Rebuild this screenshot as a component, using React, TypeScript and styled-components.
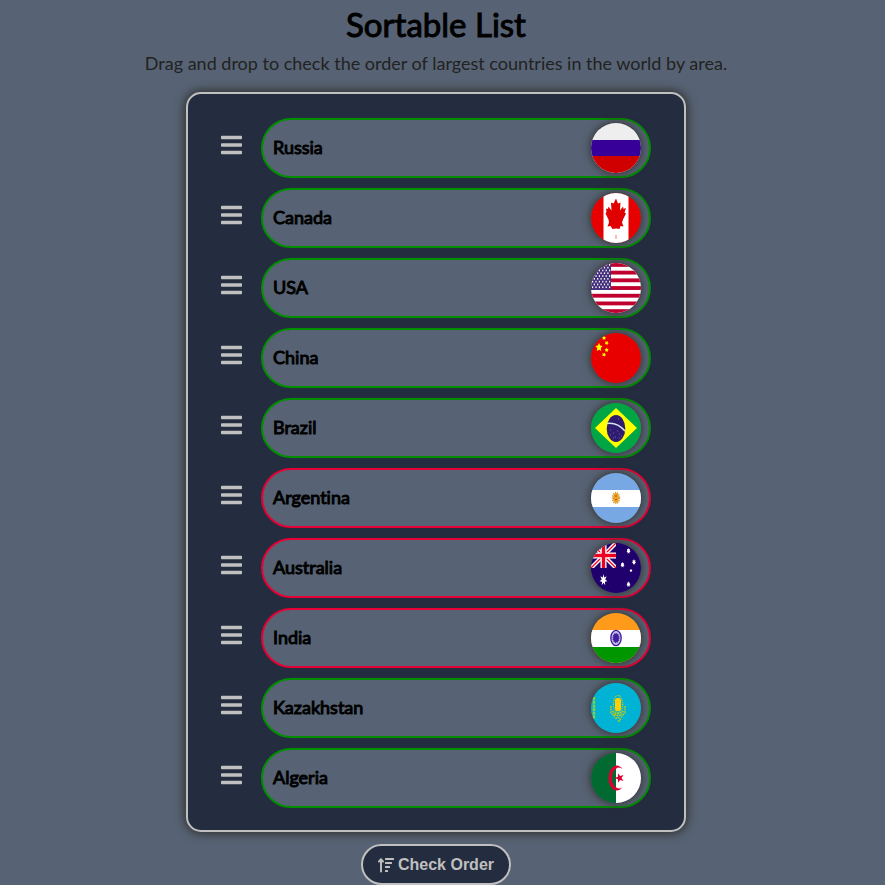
import React, { useState } from "react";
import styled, { createGlobalStyle } from "styled-components";
import { FaBars } from "react-icons/fa";

const GlobalStyle = createGlobalStyle`
  * { box-sizing: border-box; }
  body {
    margin: 0;
    background: #576374;
    font-family: Lato, sans-serif;
    font-variant-ligatures: none;
    color: #000;
  }
`;

const Page = styled.main`
  display: flex;
  flex-direction: column;
  align-items: center;
  padding-right: 13px;
`;

const Title = styled.h1`
  margin: 4px 0 7px;
  font-size: 33px;
  line-height: 40px;
  font-weight: 400;
  -webkit-text-stroke: 1px currentColor;
`;

const Lead = styled.p`
  margin: 0 0 17px;
  font-size: 18px;
  line-height: 24px;
  color: #222;
`;

const Panel = styled.ul`
  list-style: none;
  width: 100%;
  max-width: 500px;
  margin: 0;
  padding: 24px 33px 22px;
  display: flex;
  flex-direction: column;
  gap: 10px;
  background: #242c3f;
  border: 2px solid #c0c0c0;
  border-radius: 15px;
  box-shadow: 0 0 10px 2px #333;
`;

const Item = styled.li`
  display: flex;
  align-items: center;
  gap: 19px;
`;

const Handle = styled.span`
  display: flex;
  padding-bottom: 6px;
  color: #c0c0c0;
  font-size: 24px;
  cursor: grab;
  svg { width: 21px; height: 24px; }
`;

const Pill = styled.div<{ $correct: boolean }>`
  flex: 1;
  display: flex;
  align-items: center;
  justify-content: space-between;
  height: 60px;
  padding: 0 8px 0 10px;
  border: 2px solid ${(p) => (p.$correct ? "#008f00" : "#e60035")};
  border-radius: 30px;
  background: #576374;
  cursor: grab;
`;

const Country = styled.span`
  padding-bottom: 2px;
  font-size: 18px;
  line-height: 24px;
  -webkit-text-stroke: 1px currentColor;
`;

const Flag = styled.svg`
  width: 50px;
  height: 50px;
  border-radius: 50%;
  box-shadow: 0 0 8px 1px #333;
`;

const CheckButton = styled.button`
  display: flex;
  align-items: center;
  gap: 4px;
  height: 41px;
  margin-top: 12px;
  padding: 0 15px;
  border: 2px solid #c0c0c0;
  border-radius: 21px;
  background: #242c3f;
  color: #c0c0c0;
  font: bold 16px "Liberation Sans", Arial, sans-serif;
  cursor: pointer;
`;

const SortIcon = () => (
  <svg width="16" height="16" viewBox="0 0 16 16" fill="currentColor" aria-hidden="true">
    <path
      d="M3 14.500V2.500M0.900 4.600L3 2.200 5.100 4.600"
      fill="none"
      stroke="currentColor"
      strokeWidth="1.900"
      strokeLinecap="round"
      strokeLinejoin="round"
    />
    <rect x="7" y="1" width="9" height="2" rx="0.500" />
    <rect x="7" y="5" width="7" height="2" rx="0.500" />
    <rect x="7" y="9" width="5" height="2" rx="0.500" />
    <rect x="7" y="13" width="3" height="2" rx="0.500" />
  </svg>
);

const star = (cx: number, cy: number, r: number, points = 5, inner = 0.4, turn = 0) =>
  Array.from({ length: points * 2 }, (_, i) => {
    const radius = i % 2 ? r * inner : r;
    const a = (Math.PI * i) / points - Math.PI / 2 + turn;
    return `${(cx + radius * Math.cos(a)).toFixed(2)},${(cy + radius * Math.sin(a)).toFixed(2)}`;
  }).join(" ");

const flags: Record<string, React.ReactNode> = {
  Russia: (
    <>
      <rect width="50" height="50" fill="#eee" />
      <rect y="17" width="50" height="16" fill="#360099" />
      <rect y="33" width="50" height="17" fill="#d00000" />
    </>
  ),
  Canada: (
    <>
      <rect width="50" height="50" fill="#e60000" />
      <rect x="12.500" width="25" height="50" fill="#fff" />
      <path
        fill="#e00000"
        d="M25 5.500l2 5 2.500-1-.5 8 3-4 .5 2.500 2.500-1-1.500 4.500 1.500 1-3 6-1 3 1.500 4-3-.5-1 3-3-.5-4 .5-2-3-3 .5 1.500-4-.5-3-3-6 1-1.500-.5-3.500 2 .5.5-2.500 3 4-.5-8 2.500 1z"
      />
      <path fill="#f5a0a0" d="M24.300 42h1.400v4h-1.400z" />
    </>
  ),
  USA: (
    <>
      <rect width="50" height="50" fill="#fff" />
      {Array.from({ length: 7 }, (_, i) => (
        <rect key={i} y={i * 7.7} width="50" height="3.850" fill="#c0002f" />
      ))}
      <rect width="20" height="27" fill="#43307c" />
      {Array.from({ length: 9 }, (_, r) =>
        Array.from({ length: r % 2 ? 5 : 6 }, (_, c) => (
          <rect
            key={`${r}-${c}`}
            x={1 + c * 3.4 + (r % 2 ? 1.7 : 0)}
            y={1 + r * 2.8}
            width="1.200"
            height="1.700"
            fill="#fff"
          />
        ))
      )}
    </>
  ),
  China: (
    <>
      <rect width="50" height="50" fill="#e80000" />
      <g fill="#ff0">
        <polygon points={star(8, 12, 3.8, 5, 0.5)} transform="scale(1 1.200)" />
        <polygon points={star(13, 5, 2.2, 5, 0.55)} />
        <polygon points={star(15.7, 10, 2.2, 5, 0.55, 0.4)} />
        <polygon points={star(15.7, 17, 2.2, 5, 0.55)} />
        <polygon points={star(13, 21.7, 2.2, 5, 0.55, 0.4)} />
      </g>
    </>
  ),
  Brazil: (
    <>
      <rect width="50" height="50" fill="#00a644" />
      <path fill="#ff0" d="M25 5l21 20-21 20L4 25z" />
      <ellipse cx="25" cy="25.500" rx="9.300" ry="13.500" fill="#2f1b70" />
      <path d="M16 20.500Q26 19 34 28" fill="none" stroke="#d3e5ee" strokeWidth="1.600" />
      <path
        d="M19 27h1M22 30h1M19 32h1M24 34h1M28 31h1M26 28h1M30 33h1M22 35h1M28 35h1M27 16h1"
        stroke="#8074b0"
        strokeWidth="0.800"
      />
    </>
  ),
  Argentina: (
    <>
      <rect width="50" height="50" fill="#78a8e4" />
      <rect y="17" width="50" height="17" fill="#fff" />
      <ellipse cx="25" cy="25" rx="3" ry="5" fill="#f0a020" />
      <ellipse cx="25" cy="25" rx="3.500" ry="5.500" fill="none" stroke="#d69a3a" strokeWidth="1.500" strokeDasharray="1.200 1" />
      <path d="M24 23h2M24 26.500h2" stroke="#8a5a10" strokeWidth="0.800" />
    </>
  ),
  Australia: (
    <>
      <rect width="50" height="50" fill="#20006c" />
      <path d="M0 0l25 25M25 0L0 25" stroke="#fff" strokeWidth="4" />
      <path d="M0 0l25 25M25 0L0 25" stroke="#f00020" strokeWidth="1.300" />
      <path d="M12.500 0v25M0 12.500h25" stroke="#fff" strokeWidth="6" />
      <path d="M12.500 0v25M0 12.500h25" stroke="#f00020" strokeWidth="3.400" />
      <rect x="25" width="4" height="29" fill="#20006c" />
      <rect y="25" width="25" height="4" fill="#20006c" />
      <g fill="#fff">
        <polygon points={star(12.5, 25, 4, 7, 0.45)} transform="scale(1 1.480)" />
        <polygon points={star(37.5, 5.3, 2, 7, 0.6)} transform="scale(1 1.500)" />
        <polygon points={star(31.5, 14.5, 2, 7, 0.6)} transform="scale(1 1.500)" />
        <polygon points={star(43, 12.7, 2, 7, 0.6)} transform="scale(1 1.500)" />
        <polygon points={star(40, 27.5, 1.6, 5, 0.6)} />
        <polygon points={star(37.5, 27.5, 2, 7, 0.6)} transform="scale(1 1.500)" />
      </g>
    </>
  ),
  India: (
    <>
      <rect width="50" height="50" fill="#ff9a1a" />
      <rect y="17" width="50" height="17" fill="#fff" />
      <rect y="34" width="50" height="16" fill="#009600" />
      <ellipse cx="25" cy="25" rx="5.200" ry="7.600" fill="#c4bae6" stroke="#3a1c9c" strokeWidth="1.300" />
      <ellipse cx="25" cy="25" rx="2.800" ry="4.300" fill="#4020a0" stroke="#4020a0" strokeWidth="1.400" strokeDasharray="1 0.800" />
    </>
  ),
  Kazakhstan: (
    <>
      <rect width="50" height="50" fill="#00b2d4" />
      <path d="M3 14v22" stroke="#8fcc3c" strokeWidth="2.400" strokeDasharray="3 0.700" />
      <rect x="24" y="15" width="6" height="13" rx="2.500" fill="#ffd000" />
      <ellipse cx="27" cy="21" rx="4.600" ry="8.500" fill="none" stroke="#c8d020" strokeWidth="1.200" strokeDasharray="1 1" />
      <path
        d="M20 23v7q3 2 4 5M34 23v7q-3 2-4 5M21.500 28q5 5 11 0M23 31q4 3 8 0M24.500 36q2.500-3 5 0l-1 2h-2"
        fill="none"
        stroke="#b4cc20"
        strokeWidth="1.400"
        strokeDasharray="2 0.600"
      />
    </>
  ),
  Algeria: (
    <>
      <rect width="25" height="50" fill="#006a30" />
      <rect x="25" width="25" height="50" fill="#fff" />
      <path fill="#dc0032" d="M31.500 16A8.300 12.500 0 1 0 31.500 34A7 10.500 0 1 1 31.500 16z" />
      <polygon points={star(28.5, 25, 5, 5, 0.4, -Math.PI / 2)} fill="#dc0032" />
    </>
  ),
};

const correctOrder = [
  "Russia", "Canada", "USA", "China", "Brazil",
  "Australia", "India", "Argentina", "Kazakhstan", "Algeria",
];

const startOrder = [
  "Russia", "Canada", "USA", "China", "Brazil",
  "Argentina", "Australia", "India", "Kazakhstan", "Algeria",
];

export default function App() {
  const [order, setOrder] = useState(startOrder);
  const [checked, setChecked] = useState(startOrder);
  const [dragged, setDragged] = useState<number | null>(null);

  const drop = (target: number) => {
    if (dragged === null) return;
    const next = [...order];
    [next[dragged], next[target]] = [next[target], next[dragged]];
    setOrder(next);
    setDragged(null);
  };

  return (
    <>
      <GlobalStyle />
      <Page>
        <Title>Sortable List</Title>
        <Lead>Drag and drop to check the order of largest countries in the world by area.</Lead>
        <Panel>
          {order.map((name, i) => (
            <Item
              key={name}
              draggable
              onDragStart={() => setDragged(i)}
              onDragOver={(e) => e.preventDefault()}
              onDrop={() => drop(i)}
            >
              <Handle aria-hidden="true">
                <FaBars />
              </Handle>
              <Pill $correct={checked[i] === correctOrder[i]}>
                <Country>{name}</Country>
                <Flag viewBox="0 0 50 50" role="img" aria-label={`Flag of ${name}`}>
                  {flags[name]}
                </Flag>
              </Pill>
            </Item>
          ))}
        </Panel>
        <CheckButton type="button" onClick={() => setChecked(order)}>
          <SortIcon />
          Check Order
        </CheckButton>
      </Page>
    </>
  );
}
